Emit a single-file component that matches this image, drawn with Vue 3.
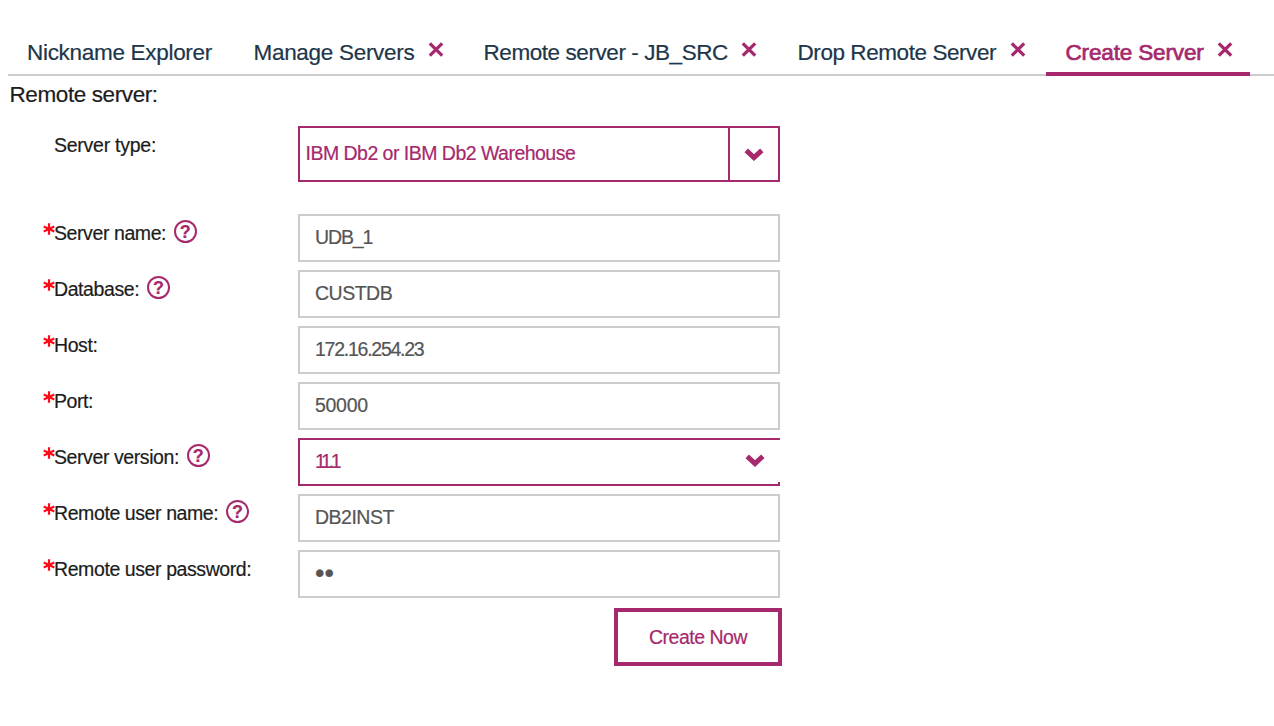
<script setup>
const tabs = [
  { label: 'Nickname Explorer', cls: 'explorer' },
  { label: 'Manage Servers', cls: 'manage', closable: true },
  { label: 'Remote server - JB_SRC', cls: 'remote', closable: true },
  { label: 'Drop Remote Server', cls: 'drop', closable: true },
  { label: 'Create Server', cls: 'create', closable: true, active: true },
]
const fields = [
  { label: 'Server name:', help: true, value: 'UDB_1', cls: 'server' },
  { label: 'Database:', help: true, value: 'CUSTDB' },
  { label: 'Host:', value: '172.16.254.23', cls: 'address' },
  { label: 'Port:', value: '50000', cls: 'port' },
  { label: 'Server version:', help: true, value: '11.1', cls: 'select' },
  { label: 'Remote user name:', help: true, value: 'DB2INST' },
  { label: 'Remote user password:', value: '••', cls: 'password' },
]
</script>

<template>
  <main class="page">
    <nav class="tabs">
      <div v-for="t in tabs" :key="t.label" class="tab" :class="[t.cls, { active: t.active }]">
        <span class="tab-label">{{ t.label }}</span>
        <svg v-if="t.closable" class="close" viewBox="0 0 16 16"><path d="M1.8 2.3 14.2 14.7M14.2 2.3 1.8 14.7" /></svg>
      </div>
    </nav>
    <h1>Remote server:</h1>
    <form class="form" @submit.prevent>
      <div class="row type-row">
        <label class="label"><span class="name wide">Server type:</span></label>
        <div class="type-select">
          <span class="type-value">IBM Db2 or IBM Db2 Warehouse</span>
          <span class="arrow"><svg class="chevron" viewBox="0 0 20 13"><path d="M2.2 2.3 10 9.5 17.8 2.3" /></svg></span>
        </div>
      </div>
      <div v-for="f in fields" :key="f.label" class="row">
        <label class="label">
          <svg class="star" viewBox="0 0 12 12"><path d="M6 .2V11.8M.7 3.4 11.3 8.6M.7 8.6 11.3 3.4" /></svg>
          <span class="name">{{ f.label }}</span>
          <span v-if="f.help" class="help">?</span>
        </label>
        <div class="field" :class="f.cls">
          <span class="value">{{ f.value }}</span>
          <svg v-if="f.cls === 'select'" class="chevron" viewBox="0 0 20 13"><path d="M2.2 2.3 10 9.5 17.8 2.3" /></svg>
        </div>
      </div>
      <button class="submit">Create Now</button>
    </form>
  </main>
</template>

<style>
body { margin: 0; background: #fff; }
</style>

<style scoped>
.page { box-sizing: border-box; width: 1274px; height: 726px; padding: 30px 0 0 8px; overflow: hidden; font-family: "Liberation Sans", Arial, sans-serif; color: #1c1c1c; -webkit-text-stroke: .2px currentColor; }
.tabs { display: flex; box-sizing: border-box; height: 46px; border-bottom: 2px solid #ccc; }
.tab { display: flex; box-sizing: border-box; height: 46px; padding: 10px 0 0 18.5px; color: #1d3649; font-size: 22.5px; line-height: 26px; letter-spacing: -.3px; white-space: nowrap; justify-content: space-between; }
.explorer { width: 227px; padding-left: 19px; }
.manage { width: 230px; padding-right: 21.5px; }
.remote { width: 314px; padding-right: 22px; letter-spacing: -.43px; }
.drop { width: 267px; padding-right: 20px; letter-spacing: -.43px; }
.create { width: 204px; padding-left: 19.5px; padding-right: 17px; letter-spacing: -.15px; }
.active { color: #a5296c; border-bottom: 4px solid #a5296c; -webkit-text-stroke: .7px #a5296c; }
.close { width: 16px; height: 16px; margin-top: 1px; fill: none; stroke: #a5296c; stroke-width: 3.3; }
h1 { margin: 6px 0 0 1.5px; font-size: 22.5px; font-weight: 400; line-height: 26px; letter-spacing: -.4px; }
.form { display: flex; flex-direction: column; gap: 8px; width: 774px; margin-top: 18px; font-size: 19.5px; line-height: 22px; letter-spacing: -.5px; }
.row { display: flex; width: 772px; height: 48px; }
.type-row { height: 56px; margin-bottom: 24px; }
.label { display: flex; position: relative; width: 244px; padding: 8px 0 0 46px; box-sizing: border-box; }
.name { height: 22px; white-space: nowrap; letter-spacing: -.41px; }
.name.wide { letter-spacing: -.25px; }
.star { position: absolute; left: 34.7px; top: 8.5px; width: 12px; height: 12px; fill: none; stroke: #ff0a18; stroke-width: 2.2; }
.help { box-sizing: border-box; width: 23px; height: 23px; margin: -2px 0 0 7.7px; border: 2px solid #a5296c; border-radius: 50%; color: #a5296c; font-size: 18px; font-weight: 700; line-height: 21px; letter-spacing: 0; text-align: center; }
.label + div { position: relative; left: 46px; box-sizing: border-box; width: 482px; }
.type-select { display: flex; height: 56px; border: 2px solid #a5296c; color: #a5296c; }
.type-value { flex: 1; padding: 14px 0 0 5.5px; letter-spacing: -.52px; }
.arrow { display: flex; align-items: center; justify-content: center; width: 47px; padding-right: 1px; border-left: 2px solid #a5296c; }
.chevron { width: 20px; height: 13px; fill: none; stroke: #a5296c; stroke-width: 5; }
.field { display: flex; align-items: center; justify-content: space-between; height: 48px; padding: 0 15px 0; border: 2px solid #ccc; color: #555; }
.value { margin-top: -3px; }
.server .value { letter-spacing: -1.1px; }
.address .value { letter-spacing: -1.25px; }
.port .value { letter-spacing: -.3px; }
.field.select { border-color: #a5296c; border-right: 0; color: #a5296c; }
.select .value { letter-spacing: -3.3px; }
.select .chevron { margin-top: -3px; }
.select::after { content: ""; position: absolute; right: 0; bottom: 0; width: 2px; height: 2px; background: #a5296c; }
.password .value { font-size: 27px; letter-spacing: 0; }
.submit { align-self: flex-end; box-sizing: border-box; width: 168px; height: 58px; margin-top: 2px; padding: 0; border: 4px solid #a5296c; background: #fff; color: #a5296c; font: inherit; letter-spacing: -.5px; }
</style>
